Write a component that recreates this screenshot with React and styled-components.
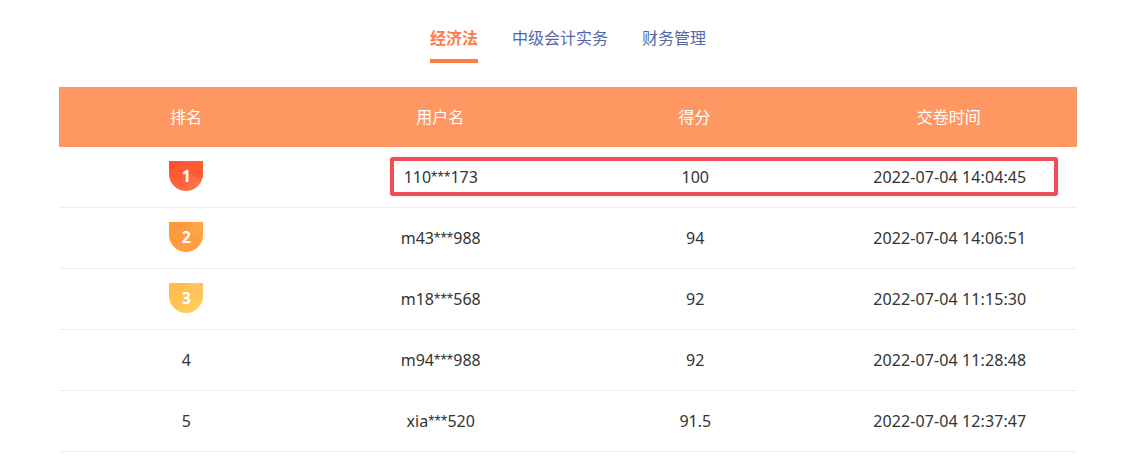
import React from 'react'
import styled, { createGlobalStyle } from 'styled-components'

const GlobalStyle = createGlobalStyle`
    body {
        margin: 0;
        background: #fff;
        font-family: "Noto Sans", "Noto Sans CJK SC", sans-serif;
        color: #333;
    }
`

const Page = styled.div`
    width: 1018px;
    margin: 0 auto;
    padding-top: 24px;
`

const Tabs = styled.div`
    display: flex;
    justify-content: center;
    gap: 34px;
    margin-bottom: 24px;
`

const Tab = styled.div`
    height: 39px;
    box-sizing: border-box;
    font-family: "Noto Sans CJK SC", sans-serif;
    font-size: 16px;
    line-height: 26px;
    font-weight: ${(p) => (p.$active ? 700 : 400)};
    color: ${(p) => (p.$active ? '#ff7b47' : '#5468a8')};
    border-bottom: 4px solid ${(p) => (p.$active ? '#ff7b47' : 'transparent')};
`

const Head = styled.div`
    display: grid;
    grid-template-columns: repeat(4, 1fr);
    height: 60px;
    box-sizing: border-box;
    padding: 0 1px 2px 0;
    align-items: center;
    background: #ff9763;
    color: #fff;
    font-family: "Noto Sans CJK SC", sans-serif;
    font-size: 16px;
    text-align: center;
`

const Row = styled.div`
    position: relative;
    display: grid;
    grid-template-columns: repeat(4, 1fr);
    height: 60px;
    align-items: center;
    border-bottom: 1px solid #eee;
    font-size: 16px;
    text-align: center;
`

const Stars = styled.span`
    font-family: "Liberation Sans", sans-serif;
    letter-spacing: 0.2px;
`

const Time = styled.div`
    letter-spacing: 0.1px;
`

const Highlight = styled.div`
    position: absolute;
    left: 331px;
    top: 10px;
    width: 668px;
    height: 39px;
    box-sizing: border-box;
    border: 4px solid #ee4d55;
    border-radius: 3px;
    box-shadow: 0 0 1px rgba(238, 77, 85, 0.7);
`

const palette = {
    1: ['#ff4d26', '#ff7a52', '#ff5a35'],
    2: ['#ff9633', '#ffa24a', '#ffa445'],
    3: ['#ffb84d', '#ffd45e', '#ffc45c'],
}

const Badge = styled.div`
    position: relative;
    overflow: hidden;
    justify-self: center;
    align-self: start;
    margin-top: 14px;
    width: 34px;
    height: 30px;
    border-radius: 0 0 17px 17px;
    background: linear-gradient(135deg, ${(p) => palette[p.$rank][0]}, ${(p) => palette[p.$rank][1]});
    color: #fff;
    font-size: 16px;
    font-weight: 700;
    line-height: 30px;

    &::before {
        content: '';
        position: absolute;
        left: 20px;
        top: -9px;
        width: 26px;
        height: 26px;
        border-radius: 50%;
        background: ${(p) => palette[p.$rank][2]};
    }

    span {
        position: relative;
    }
`

const rows = [
    [1, '110', '173', '100', '2022-07-04 14:04:45'],
    [2, 'm43', '988', '94', '2022-07-04 14:06:51'],
    [3, 'm18', '568', '92', '2022-07-04 11:15:30'],
    [4, 'm94', '988', '92', '2022-07-04 11:28:48'],
    [5, 'xia', '520', '91.5', '2022-07-04 12:37:47'],
]

export default function App() {
    return (
        <Page>
            <GlobalStyle />
            <Tabs>
                <Tab $active>经济法</Tab>
                <Tab>中级会计实务</Tab>
                <Tab>财务管理</Tab>
            </Tabs>
            <Head>
                <div>排名</div>
                <div>用户名</div>
                <div>得分</div>
                <div>交卷时间</div>
            </Head>
            {rows.map(([rank, start, end, score, time]) => (
                <Row key={rank}>
                    {rank <= 3 ? (
                        <Badge $rank={rank}>
                            <span>{rank}</span>
                        </Badge>
                    ) : (
                        <div>{rank}</div>
                    )}
                    <div>
                        {start}
                        <Stars>***</Stars>
                        {end}
                    </div>
                    <div>{score}</div>
                    <Time>{time}</Time>
                    {rank === 1 && <Highlight />}
                </Row>
            ))}
        </Page>
    )
}
